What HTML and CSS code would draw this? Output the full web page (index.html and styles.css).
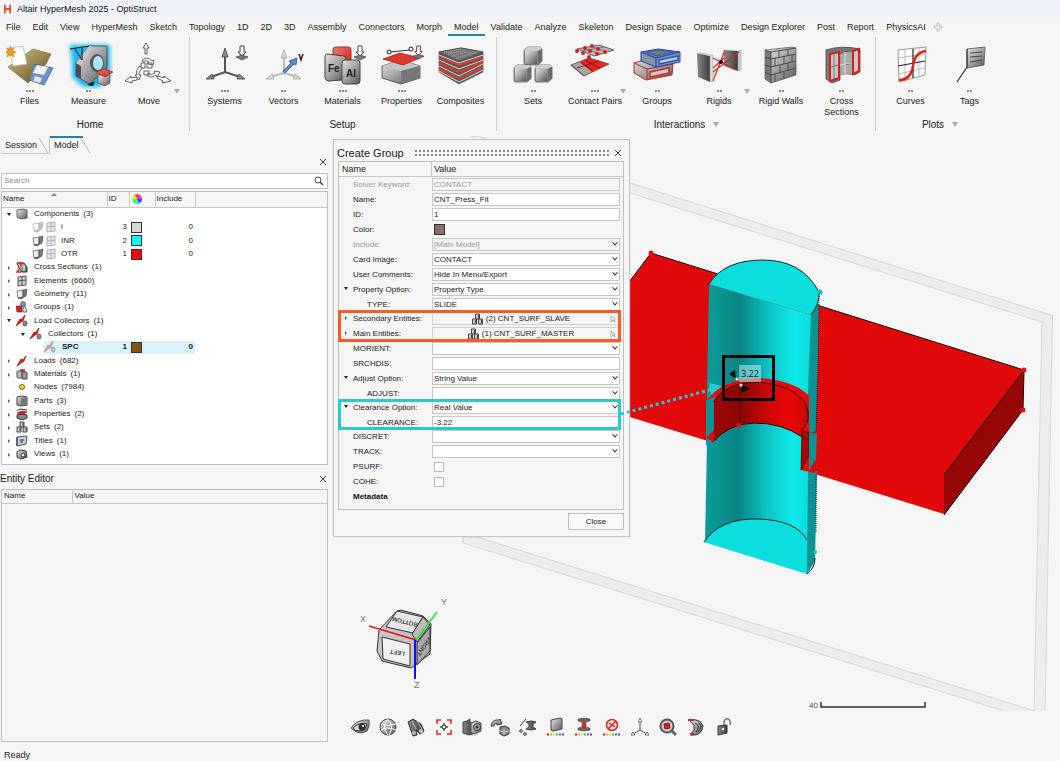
FILE: index.html
```html
<!DOCTYPE html>
<html lang="en">
<head>
<meta charset="utf-8">
<title>Altair HyperMesh 2025 - OptiStruct</title>
<link rel="stylesheet" href="styles.css">
</head>
<body>
<svg class="sprite" aria-hidden="true">
  <defs>
    <linearGradient id="steel" x1="0" y1="0" x2="1" y2="1"><stop offset="0" stop-color="#e4e4e4"/><stop offset=".5" stop-color="#a2a2a2"/><stop offset="1" stop-color="#555"/></linearGradient>
    <linearGradient id="dark" x1="0" y1="0" x2="1" y2="0"><stop offset="0" stop-color="#888"/><stop offset="1" stop-color="#3c3c3c"/></linearGradient>
    <linearGradient id="redg" x1="0" y1="0" x2="1" y2="1"><stop offset="0" stop-color="#f47a70"/><stop offset="1" stop-color="#c81c1c"/></linearGradient>
    <linearGradient id="tan" x1="0" y1="0" x2="1" y2="1"><stop offset="0" stop-color="#d0bd80"/><stop offset="1" stop-color="#665124"/></linearGradient>
    <linearGradient id="cyl" x1="0" y1="0" x2="1" y2="0"><stop offset="0" stop-color="#0c9a9a"/><stop offset=".12" stop-color="#0b9494"/><stop offset=".32" stop-color="#0a8282"/><stop offset=".6" stop-color="#0cc4c4"/><stop offset=".85" stop-color="#0eeaea"/><stop offset="1" stop-color="#0cdcdc"/></linearGradient>
    <linearGradient id="bore" x1="0" y1="0" x2="1" y2="0"><stop offset="0" stop-color="#9c0606"/><stop offset=".3" stop-color="#900505"/><stop offset=".6" stop-color="#d00707"/><stop offset=".8" stop-color="#ec0808"/><stop offset="1" stop-color="#c40606"/></linearGradient>
    <filter id="glow" x="-30%" y="-30%" width="160%" height="160%"><feGaussianBlur stdDeviation="2"/></filter>
  </defs>
  <symbol id="press" viewBox="0 0 14 16"><path d="M5 1h4v6h2L7 11 3 7h2z" fill="#fff" stroke="#444"/><path d="M1 12l6-2 6 2-6 3z" fill="#777" stroke="#444" stroke-width=".7"/></symbol>
  <symbol id="cube" viewBox="0 0 20 20"><path d="M1 4L4 1h13l2 2v12l-4 4H2l-1-2z" fill="#8c8c8c" stroke="#666" stroke-width=".8"/><path d="M2 5h12v13H3l-1-1z" fill="url(#steel)"/><path d="M1 4l3-3h13l2 2-4 2H2z" fill="#cfcfcf"/><path d="M15 5l4-2v12l-4 4z" fill="#6b6b6b"/></symbol>
  <symbol id="files" viewBox="0 0 48 48"><path d="M2 26L27 8l18 5-5 10-18 19z" fill="url(#tan)" stroke="#6a5a2a" stroke-width=".6"/><path d="M28 23l19 4-9 17-15-5z" fill="#6b94c4" stroke="#35547c" stroke-width=".7"/><path d="M31 24l11 2-4 8-11-2z" fill="#eef2f6"/><path d="M29 35l7 2-2 5-7-2z" fill="#e0e6ee"/><path d="M2 26L27 8l18 5-17 10-5 17z" fill="url(#tan)"/><path d="M3 7l14-2 4 18-14 2z" fill="#fdfdfd" stroke="#bbb" stroke-width=".8"/><path d="M4 5l1 3 3-1-1 3 3 1-3 2 1 3-4-2-3 2 1-3-3-2 3-1-1-3 3 1z" fill="#f49a12" stroke="#9a6410" stroke-width=".4"/></symbol>
  <symbol id="measure" viewBox="0 0 48 48"><path d="M7 6h36v29l-9 9H19L9 35V18z" fill="#12b9f6" stroke="#12b9f6" stroke-width="4" filter="url(#glow)"/><path d="M24 5h18v22L24 43 11 35V22z" fill="url(#steel)" stroke="#444" stroke-width=".8"/><path d="M11 22l5 3v13l-5-3z" fill="#4c4c4c"/><path d="M11 22L24 5l4 1-12 19z" fill="#c8c8c8"/><ellipse cx="32" cy="22" rx="7" ry="9" fill="#555"/><ellipse cx="33" cy="22" rx="5" ry="7" fill="#a8e6fa"/><path d="M5 8l19-3M10 8l7 11V7" fill="none" stroke="#111"/><path d="M33 34h12v8l-5 3-7-3z" fill="url(#steel)" stroke="#444" stroke-width=".6"/><path d="M31 31l9-3 8 3-8 5z" fill="url(#redg)" stroke="#a11" stroke-width=".5"/><path d="M22 44l8-4-2 5z" fill="#111"/></symbol>
  <symbol id="move" viewBox="0 0 48 48"><g fill="#fafafa" stroke="#555" stroke-width=".9"><path d="M20 13V7h-2l3-5 3 5h-2v6zM0 40l6-5v2l6-1v3l-5 1v2zM46 40l-7-5v2l-6-2-1 2 6 3-1 2z"/><path d="M17 20q5-6 10 0l2-1-1 5-5-1 1-2q-3-3-5 0zM15 25q-5 5-3 9h-2l4 5 2-5h-2q-1-3 3-7zM22 34q4 4 9 0l1 2 3-5-6-1 1 2q-4 3-7 0zM16 22h4v5h-4zM22 22h5v5h-5zM19 30h5v4h-5z"/></g></symbol>
  <symbol id="systems" viewBox="0 0 48 48"><path d="M24 13v18M24 31l-14 5M24 31l15 5" stroke="#555" stroke-width="2" fill="none"/><path d="M24 7l3 9h-6zM5 38l6-5 2 5zM44 38l-6-5-2 5z" fill="#8a8a8a" stroke="#444" stroke-width=".8"/><use href="#press" x="34" y="4" width="14" height="16"/></symbol>
  <symbol id="vectors" viewBox="0 0 48 48"><path d="M24 14v18L10 36M24 32l14 4" stroke="#bbb" stroke-width="2" fill="none"/><path d="M24 9l3 8h-6zM6 38l6-5 2 5zM41 38l-6-5-2 5z" fill="#d4d4d4" stroke="#aaa" stroke-width=".8"/><path d="M23 30l8-8-2-2 8-3-1 7-2-1-9 9z" fill="#5b8fd0" stroke="#2b5288" stroke-width=".8"/><path d="M39 13l2 6 2-6" fill="none" stroke="#222" stroke-width="1.500"/></symbol>
  <symbol id="materials" viewBox="0 0 48 48"><rect x="14" y="6" width="18" height="22" rx="3" fill="url(#redg)" stroke="#933"/><path d="M8 13l17 2q2 0 2 3l-1 18q0 3-3 3L9 40q-3-1-3-4V16q0-3 2-3z" fill="url(#steel)" stroke="#444"/><text class="element" x="9" y="31">Fe</text><rect x="23" y="19" width="18" height="24" rx="3" fill="url(#steel)" stroke="#444"/><text class="element" x="27" y="36">Al</text><use href="#press" x="34" y="4" width="14" height="16"/></symbol>
  <symbol id="properties" viewBox="0 0 48 48"><path d="M4 25l19-6 19 6v12l-19 6-19-6z" fill="url(#steel)" stroke="#444" stroke-width=".8"/><path d="M4 25l19 5 19-5-19-6z" fill="#c4c4c4"/><path d="M23 30v13l19-6V25z" fill="#777"/><path d="M5 18l17-6 20 5-17 7z" fill="#e0382e" stroke="#922" stroke-width=".8"/><path d="M12 11l20-2" stroke="#333"/><circle cx="11" cy="11" r="2" fill="#fff" stroke="#222"/><circle cx="33" cy="8" r="2" fill="#fff" stroke="#222"/><use href="#press" x="34" y="4" width="13" height="15"/></symbol>
  <symbol id="composites" viewBox="0 0 48 48"><path d="M2 11L24 7l22 4v20L22 43 2 31z" fill="#555" stroke="#444" stroke-width=".6"/><g fill="none" stroke="#e33a2e" stroke-width="2"><path d="M2 16l20 8 24-8M2 22l20 9 24-10M2 28l20 10 24-12"/></g><g fill="none" stroke="#ddd"><path d="M2 14l20 8 24-8M2 19l20 9 24-9M2 25l20 10 24-12M2 30l20 11 24-12"/></g><path d="M2 11L24 7l22 4-24 9z" fill="#777" stroke="#555"/><path d="M7 11l17-3M11 13l18-4M15 15l19-5M19 17l21-6" stroke="#aaa" stroke-dasharray="1 1"/></symbol>
  <symbol id="sets" viewBox="0 0 48 48"><use href="#cube" x="14" y="5" width="20" height="20"/><use href="#cube" x="4" y="23" width="19" height="19"/><use href="#cube" x="25" y="23" width="19" height="19"/></symbol>
  <symbol id="contact" viewBox="0 0 48 48"><path d="M6 8l22-4 15 5-20 6z" fill="#b8b8b8" stroke="#666"/><path d="M13 7l16 6M20 5l15 6M11 10l22-4" stroke="#666" fill="none" stroke-width=".8"/><path d="M0 24l18-7 20 6-25 12z" fill="#a5a5a5" stroke="#666"/><path d="M9 21l9-4 20 6-17 8z" fill="#e4261e"/><path d="M9 21l13 9M14 19l15 8M6 27l22-7M0 24l13 11" stroke="#801" stroke-width=".8"/><g fill="#d8201c"><circle cx="6" cy="10" r="2"/><circle cx="14" cy="7" r="2"/><circle cx="21" cy="5" r="2"/><circle cx="12" cy="12" r="2"/><circle cx="19" cy="10" r="2"/><circle cx="27" cy="8" r="2"/><circle cx="18" cy="16" r="2"/><circle cx="26" cy="13" r="2"/><circle cx="34" cy="11" r="2"/></g></symbol>
  <symbol id="groups" viewBox="0 0 48 48"><path d="M1 22l17-5 22 6-1 11-26 5-12-7z" fill="url(#steel)" stroke="#c0281c"/><path d="M1 22l13 6 26-5M14 28v11" stroke="#c0281c" fill="none"/><path d="M17 31l19-4v5l-19 4z" fill="#ccc" stroke="#d32b1e" stroke-width="1.500"/><path d="M8 11L25 8l22 3v10l-24 5L8 20z" fill="#8a93a4" stroke="#1f46a8"/><path d="M13 11l12-2 16 2-17 4z" fill="#777" stroke="#2a56c4"/><path d="M8 11l15 6 24-6M23 17v9" stroke="#2a56c4" fill="none" stroke-width="1.500"/><path d="M26 19l19-4v4l-19 4z" fill="#ccc" stroke="#2a56c4" stroke-width="1.500"/></symbol>
  <symbol id="rigids" viewBox="0 0 48 48"><path d="M2 12l13 3v26L3 36z" fill="url(#dark)"/><path d="M15 15l3-1v26l-3 1z" fill="#ddd" stroke="#999" stroke-width=".5"/><path d="M2 12l4-1 12 3-3 1z" fill="#ccc"/><path d="M29 9l14 1v20l-14-5z" fill="url(#dark)"/><path d="M43 10l3-1v20l-3 1z" fill="#ccc" stroke="#999" stroke-width=".5"/><path d="M18 17l23 12M18 40L30 9M18 31l26-20M18 27l11-10" stroke="#d6281e" stroke-width="1.200"/><circle cx="26" cy="21" r="2" fill="#211"/></symbol>
  <symbol id="walls" viewBox="0 0 48 48"><path d="M8 9l27-3 4 1v27L14 42l-6-4z" fill="url(#steel)" stroke="#555" stroke-width=".7"/><path d="M8 9l6 2v31l-6-4z" fill="#777"/><path d="M8 9l6 2 25-4M14 11v31M14 18l25-5M14 26l25-6M14 34l25-7M8 16l6 2M8 24l6 2M8 31l6 3M22 10v7M31 8v7M18 17v8M27 15v8M35 14v7M23 24v8M31 22v7M18 33v8M27 31v7" fill="none" stroke="#444" stroke-width=".9"/></symbol>
  <symbol id="sections" viewBox="0 0 48 48"><path d="M8 9q15-5 34-1v23l-6 3V11q-9-2-14 2v26l-8 3-6-4z" fill="#777" stroke="#444" stroke-width=".8"/><path d="M22 13q7-3 14-2v23q-8-2-14 0z" fill="#aaa" stroke="#777" stroke-width=".6"/><path d="M27 11v22M22 24q7-2 14-1" stroke="#ddd"/><path d="M12 13l9-2v26l-9 3zM35 10l6-2v22l-6 3z" fill="#c7c7c7" stroke="#d42218" stroke-width="2"/><path d="M16 13v25M13 26l7-2" stroke="#777"/></symbol>
  <symbol id="curves" viewBox="0 0 48 48"><path d="M11 9l28-3-1 28-26 7z" fill="#fff" stroke="#999"/><path d="M18 8v31M32 7v29M11 17l27-4M11 33l27-6" stroke="#bbb"/><path d="M26 8v29M11 25l27-5" stroke="#222" stroke-width="1.200"/><path d="M12 39q12 0 14-14t13-15" fill="none" stroke="#dc2318" stroke-width="2.500"/></symbol>
  <symbol id="tags" viewBox="0 0 48 48"><path d="M21 8l18-2-1 18-17 3z" fill="url(#steel)" stroke="#555" stroke-width=".8"/><path d="M24 12l12-1M24 16l12-1M24 21l12-2" stroke="#444"/><path d="M21 8v18L11 41" fill="none" stroke="#333" stroke-width="1.200"/></symbol>

  <symbol id="t-comp" viewBox="0 0 12 12"><path d="M1 2l6-1 4 1v8l-6 1-4-2z" fill="url(#steel)" stroke="#444" stroke-width=".8"/></symbol>
  <symbol id="t-geo" viewBox="0 0 12 12"><path d="M1 3l6-1v7l-5 1z" fill="#eee" stroke="#666" stroke-width=".8"/><path d="M7 2l4-1-1 7-5 3-3-1 5-1z" fill="#777" stroke="#444" stroke-width=".6"/></symbol>
  <symbol id="t-elem" viewBox="0 0 12 12"><path d="M2 2l8-1v9l-8 1z" fill="#ccc" stroke="#555"/><path d="M6 1v10M2 6l8-1" stroke="#555"/></symbol>
  <symbol id="t-cross" viewBox="0 0 12 12"><path d="M1 2h7l3 4v5H6L3 7z" fill="url(#steel)" stroke="#333"/><path d="M1 2h5L4 5M3 8l-2 3h4" fill="none" stroke="#d8281e" stroke-width="1.500"/><path d="M8 5v5" stroke="#fff"/></symbol>
  <symbol id="t-group" viewBox="0 0 12 12"><path d="M0 5h6v6H1z" fill="#d8281e" stroke="#711" stroke-width=".6"/><circle cx="7" cy="3" r="2.500" fill="#5d9be0" stroke="#246" stroke-width=".6"/><path d="M7 7l2-2 2 6H7z" fill="#ddd" stroke="#555" stroke-width=".8"/></symbol>
  <symbol id="t-load" viewBox="0 0 12 12"><path d="M1 11L5 4l2 1 3-4-2 5-3 2z" fill="#d8281e" stroke="#a11" stroke-width=".8"/></symbol>
  <symbol id="t-lc" viewBox="0 0 12 12"><path d="M0 11L4 4l1 1 4-5-2 6-3 2z" fill="#d8281e" stroke="#a11" stroke-width=".8"/><rect x="7" y="6" width="4" height="5" rx="2" fill="#888" stroke="#444" stroke-width=".7"/></symbol>
  <symbol id="t-mat" viewBox="0 0 12 12"><rect x="4" y="1" width="5" height="5" fill="#d8483e"/><rect x="1" y="3" width="5" height="7" rx="1" fill="#bbb" stroke="#555"/><rect x="6" y="4" width="5" height="7" rx="1" fill="#999" stroke="#444"/></symbol>
  <symbol id="t-node" viewBox="0 0 12 12"><circle cx="6" cy="6" r="2.500" fill="#f0d820" stroke="#776a10"/></symbol>
  <symbol id="t-part" viewBox="0 0 12 12"><path d="M1 2l5-1 5 1v8l-5 1-5-1z" fill="url(#steel)" stroke="#444"/><path d="M5 3v8l6-1V2z" fill="#777"/></symbol>
  <symbol id="t-prop" viewBox="0 0 12 12"><path d="M1 7l5-1 5 1v3l-5 2-5-2z" fill="#888" stroke="#333"/><path d="M1 5l5-2 5 1-5 3z" fill="#d8281e" stroke="#711" stroke-width=".6"/><path d="M1 3l3-2 7 1" stroke="#333" fill="none"/></symbol>
  <symbol id="t-set" viewBox="0 0 12 12"><g fill="#ccc" stroke="#333" stroke-width=".9"><path d="M4 1h4v5H4z"/><path d="M1 6h4v5H1zM7 6h4v5H7z"/></g><path d="M7 2v3M4 7v3M10 7v3" stroke="#444"/></symbol>
  <symbol id="t-title" viewBox="0 0 12 12"><path d="M1 2l10-1-1 8-9 2z" fill="#c6d0d8" stroke="#456"/><path d="M1 2v9M4 5h4M4 7h3" stroke="#234"/></symbol>
  <symbol id="t-view" viewBox="0 0 12 12"><path d="M1 4l3-2 6 1 1 6-6 2-4-2z" fill="url(#steel)" stroke="#333"/><circle cx="7" cy="7" r="2" fill="#eee" stroke="#333"/></symbol>

  <symbol id="eye" viewBox="0 0 20 20"><path d="M1 11Q7 2 19 3q1 7-2 11-8 5-16-3z" fill="url(#steel)" stroke="#555"/><path d="M3 11q6-6 14-4-2 7-8 7-4 0-6-3z" fill="#ddd" stroke="#333"/><circle cx="12" cy="10" r="3.500" fill="#333"/><circle cx="13" cy="9" r="1" fill="#fff"/></symbol>
  <symbol id="globe" viewBox="0 0 20 20"><circle cx="10" cy="10" r="8" fill="url(#steel)" stroke="#444"/><path d="M10 2q-7 8 0 16M9 2q8 7 2 16M3 7q8 3 15 0M3 13q6-4 15 0" fill="none" stroke="#fff"/></symbol>
  <symbol id="binoc" viewBox="0 0 20 20"><path d="M2 5l5-3 8 5 3 7-4 3-4-4 1 5-4 1z" fill="url(#dark)" stroke="#333"/><path d="M6 4l4 8M11 4l5 8" stroke="#bbb"/><circle cx="8" cy="16" r="2" fill="#bbb"/><circle cx="15" cy="14" r="2" fill="#ccc"/></symbol>
  <symbol id="fit" viewBox="0 0 20 20"><path d="M3 7V3h4M13 3h4v4M17 13v4h-4M7 17H3v-4" fill="none" stroke="#e0281e" stroke-width="1.500"/><circle cx="10" cy="10" r="2" fill="#fff" stroke="#111"/><path d="M10 6v2M10 12v2M6 10h2M12 10h2" stroke="#111"/></symbol>
  <symbol id="camera" viewBox="0 0 20 20"><path d="M1 5l4-1 3-2v3l3 1v11l-4 1-6-2z" fill="url(#dark)" stroke="#444"/><path d="M9 6l5-2 5 2v8l-6 3-4-1z" fill="url(#steel)" stroke="#555"/><circle cx="15" cy="10" r="3.500" fill="#aaa" stroke="#333"/><circle cx="15" cy="10" r="1.500" fill="#333"/></symbol>
  <symbol id="orbit" viewBox="0 0 20 20"><path d="M1 9Q2 2 9 3l1-1 2 5-5 1v-2Q4 6 4 9z" fill="url(#steel)" stroke="#444"/><path d="M10 10l5-1 4 2v6l-5 2-4-2z" fill="#888" stroke="#333"/><path d="M14 12v6M10 14l4 1 5-1" stroke="#ddd"/></symbol>
  <symbol id="spool" viewBox="0 0 20 20"><path d="M2 9l6-7" stroke="#333"/><circle cx="3" cy="14" r="1.300" fill="#fff" stroke="#333"/><circle cx="7" cy="17" r="1.300" fill="#fff" stroke="#333"/><path d="M8 5q5-2 10 0l-3 2v3l3 2q-5 2-10 0l3-2V7z" fill="url(#dark)" stroke="#444"/></symbol>
  <symbol id="rainbow" viewBox="0 0 20 3"><path d="M1 1.500h2" stroke="#e11" stroke-width="2"/><path d="M4 1.500h2" stroke="#fa2" stroke-width="2"/><path d="M7 1.500h2" stroke="#ee2" stroke-width="2"/><path d="M10 1.500h2" stroke="#3c3" stroke-width="2"/><path d="M13 1.500h2" stroke="#27e" stroke-width="2"/><path d="M16 1.500h2" stroke="#73d" stroke-width="2"/></symbol>
  <symbol id="shade" viewBox="0 0 20 20"><path d="M5 3l9-2 2 1v10l-9 2-2-1z" fill="url(#steel)" stroke="#444"/><use href="#rainbow" x="0" y="16" width="20" height="3"/></symbol>
  <symbol id="bolt" viewBox="0 0 20 20"><path d="M4 2q6-2 12 0v2l-4 1v5l4 1v2q-6 2-12 0v-2l4-1V5L4 4z" fill="#666" stroke="#444" stroke-width=".5"/><path d="M8 5h4v6H8z" fill="#e0281e"/><use href="#rainbow" x="0" y="16" width="20" height="3"/></symbol>
  <symbol id="noent" viewBox="0 0 20 20"><circle cx="10" cy="8" r="5.500" fill="#e8d8d6" stroke="#d02a22" stroke-width="1.500"/><path d="M6 12l8-8M7 6l6 4" stroke="#d02a22" stroke-width="1.500"/><use href="#rainbow" x="0" y="16" width="20" height="3"/></symbol>
  <symbol id="triad" viewBox="0 0 20 20"><path d="M10 5v8L3 17M10 13l7 4" fill="none" stroke="#555"/><path d="M10 1l2 4H8zM1 18l2-3 2 3zM19 18l-2-3-2 3z" fill="#fff" stroke="#555" stroke-width=".8"/></symbol>
  <symbol id="lens" viewBox="0 0 20 20"><path d="M13 13l5 5" stroke="#666" stroke-width="3"/><circle cx="9" cy="9" r="6.500" fill="#ccc" stroke="#555" stroke-width="2"/><path d="M6 7l5-1 1 5-5 1z" fill="#d8281e" stroke="#911"/></symbol>
  <symbol id="clip" viewBox="0 0 20 20"><path d="M3 3q11-2 14 6-1 8-8 9H4l4-5V8z" fill="url(#steel)" stroke="#333"/><path d="M9 6q6 3 1 9M13 6q4 4-1 9" fill="none" stroke="#333"/><path d="M2 3h6M4 17h4" stroke="#d8281e" stroke-width="2"/></symbol>
  <symbol id="unlock" viewBox="0 0 20 20"><path d="M10 9V5q1-4 4-3 3 1 2 6" fill="none" stroke="#777" stroke-width="1.500"/><path d="M4 9l9-1v8l-9 2z" fill="url(#dark)" stroke="#333"/><circle cx="9" cy="12" r="1.300" fill="#eee"/></symbol>
</svg>

<div class="app">
  <header class="titlebar">
    <svg class="logo" viewBox="0 0 10 12" aria-hidden="true"><path d="M1 1h2v3q2 2 4 0V1h2v10H7V8q-2-2-4 0v3H1z" fill="#f2542d"/></svg>
    <h1>Altair HyperMesh 2025 - OptiStruct</h1>
  </header>

  <nav class="menu">
    <a href="#">File</a><a href="#">Edit</a><a href="#">View</a><a href="#">HyperMesh</a><a href="#">Sketch</a><a href="#">Topology</a><a href="#">1D</a><a href="#">2D</a><a href="#">3D</a><a href="#">Assembly</a><a href="#">Connectors</a><a href="#">Morph</a><a href="#" class="current">Model</a><a href="#">Validate</a><a href="#">Analyze</a><a href="#">Skeleton</a><a href="#">Design Space</a><a href="#">Optimize</a><a href="#">Design Explorer</a><a href="#">Post</a><a href="#">Report</a><a href="#">PhysicsAI</a>
    <button class="add-tab" aria-label="Add ribbon"><svg viewBox="0 0 10 10"><path d="M4 1h2v3h3v2H6v3H4V6H1V4h3z" fill="#fff" stroke="#bbb"/></svg></button>
  </nav>

  <div class="ribbon">
    <section class="group">
      <div class="tools">
        <button class="tool"><svg><use href="#files"/></svg><i class="dots three"></i><span>Files</span></button>
        <button class="tool"><svg><use href="#measure"/></svg><i class="dots"></i><span>Measure</span></button>
        <button class="tool wide more"><svg><use href="#move"/></svg><i class="dots none"></i><span>Move</span></button>
      </div>
      <h2>Home</h2>
    </section>
    <section class="group">
      <div class="tools">
        <button class="tool"><svg><use href="#systems"/></svg><i class="dots three"></i><span>Systems</span></button>
        <button class="tool"><svg><use href="#vectors"/></svg><i class="dots"></i><span>Vectors</span></button>
        <button class="tool"><svg><use href="#materials"/></svg><i class="dots three"></i><span>Materials</span></button>
        <button class="tool"><svg><use href="#properties"/></svg><i class="dots three"></i><span>Properties</span></button>
        <button class="tool"><svg><use href="#composites"/></svg><i class="dots none"></i><span>Composites</span></button>
      </div>
      <h2>Setup</h2>
    </section>
    <section class="group">
      <div class="tools">
        <button class="tool wide"><svg><use href="#sets"/></svg><i class="dots"></i><span>Sets</span></button>
        <button class="tool wide more"><svg><use href="#contact"/></svg><i class="dots three"></i><span>Contact Pairs</span></button>
        <button class="tool wide"><svg><use href="#groups"/></svg><i class="dots"></i><span>Groups</span></button>
        <button class="tool wide more"><svg><use href="#rigids"/></svg><i class="dots"></i><span>Rigids</span></button>
        <button class="tool wide"><svg><use href="#walls"/></svg><i class="dots"></i><span>Rigid Walls</span></button>
        <button class="tool"><svg><use href="#sections"/></svg><i class="dots"></i><span>Cross<br>Sections</span></button>
      </div>
      <h2 class="drop">Interactions</h2>
    </section>
    <section class="group">
      <div class="tools">
        <button class="tool"><svg><use href="#curves"/></svg><i class="dots"></i><span>Curves</span></button>
        <button class="tool"><svg><use href="#tags"/></svg><i class="dots"></i><span>Tags</span></button>
      </div>
      <h2 class="drop">Plots</h2>
    </section>
  </div>

  <main class="workspace">
    <aside class="sidebar">
      <div class="tabs">
        <button class="tab">Session<svg viewBox="0 0 10 16"><path d="M0 1l9 15" fill="none" stroke="#b4b4b4"/></svg></button>
        <button class="tab active">Model<svg viewBox="0 0 10 16"><path d="M0 1l9 15" fill="none" stroke="#b4b4b4"/></svg></button>
      </div>
      <div class="panel-top"><button class="close" aria-label="Close browser"><svg viewBox="0 0 8 8"><path d="M1 1l6 6M7 1L1 7" stroke="#444"/></svg></button></div>
      <div class="search">
        <input type="search" placeholder="Search" aria-label="Search">
        <svg viewBox="0 0 10 10" aria-hidden="true"><circle cx="4" cy="4" r="3" fill="none" stroke="#444"/><path d="M6 6l3 3" stroke="#444" stroke-width="1.500"/></svg>
      </div>
      <div class="tree-box">
        <table class="tree">
          <colgroup><col class="c-name"><col class="c-id"><col class="c-color"><col class="c-inc"><col></colgroup>
          <thead><tr><th class="sorted">Name</th><th>ID</th><th><span class="wheel"></span></th><th>Include</th><th></th></tr></thead>
          <tbody>
            <tr><td><div class="node open"><svg><use href="#t-comp"/></svg>Components&ensp;(3)</div></td><td></td><td></td><td></td><td></td></tr>
            <tr><td><div class="node leaf"><svg class="dim"><use href="#t-geo"/></svg><svg class="dim"><use href="#t-elem"/></svg>i</div></td><td>3</td><td><span class="chip grey"></span></td><td>0</td><td></td></tr>
            <tr><td><div class="node leaf"><svg><use href="#t-geo"/></svg><svg class="dim"><use href="#t-elem"/></svg>INR</div></td><td>2</td><td><span class="chip cyan"></span></td><td>0</td><td></td></tr>
            <tr><td><div class="node leaf"><svg><use href="#t-geo"/></svg><svg class="dim"><use href="#t-elem"/></svg>OTR</div></td><td>1</td><td><span class="chip red"></span></td><td>0</td><td></td></tr>
            <tr><td><div class="node shut"><svg><use href="#t-cross"/></svg>Cross Sections&ensp;(1)</div></td><td></td><td></td><td></td><td></td></tr>
            <tr><td><div class="node shut"><svg><use href="#t-elem"/></svg>Elements&ensp;(6660)</div></td><td></td><td></td><td></td><td></td></tr>
            <tr><td><div class="node shut"><svg><use href="#t-geo"/></svg>Geometry&ensp;(11)</div></td><td></td><td></td><td></td><td></td></tr>
            <tr><td><div class="node shut"><svg><use href="#t-group"/></svg>Groups&ensp;(1)</div></td><td></td><td></td><td></td><td></td></tr>
            <tr><td><div class="node open"><svg><use href="#t-lc"/></svg>Load Collectors&ensp;(1)</div></td><td></td><td></td><td></td><td></td></tr>
            <tr><td><div class="node open level2"><svg><use href="#t-lc"/></svg>Collectors&ensp;(1)</div></td><td></td><td></td><td></td><td></td></tr>
            <tr class="selected"><td><div class="node level3"><svg class="dim"><use href="#t-lc"/></svg>SPC</div></td><td>1</td><td><span class="chip brown"></span></td><td>0</td><td></td></tr>
            <tr><td><div class="node shut"><svg><use href="#t-load"/></svg>Loads&ensp;(682)</div></td><td></td><td></td><td></td><td></td></tr>
            <tr><td><div class="node shut"><svg><use href="#t-mat"/></svg>Materials&ensp;(1)</div></td><td></td><td></td><td></td><td></td></tr>
            <tr><td><div class="node"><svg><use href="#t-node"/></svg>Nodes&ensp;(7984)</div></td><td></td><td></td><td></td><td></td></tr>
            <tr><td><div class="node shut"><svg><use href="#t-part"/></svg>Parts&ensp;(3)</div></td><td></td><td></td><td></td><td></td></tr>
            <tr><td><div class="node shut"><svg><use href="#t-prop"/></svg>Properties&ensp;(2)</div></td><td></td><td></td><td></td><td></td></tr>
            <tr><td><div class="node shut"><svg><use href="#t-set"/></svg>Sets&ensp;(2)</div></td><td></td><td></td><td></td><td></td></tr>
            <tr><td><div class="node shut"><svg><use href="#t-title"/></svg>Titles&ensp;(1)</div></td><td></td><td></td><td></td><td></td></tr>
            <tr><td><div class="node shut"><svg><use href="#t-view"/></svg>Views&ensp;(1)</div></td><td></td><td></td><td></td><td></td></tr>
          </tbody>
        </table>
      </div>
      <div class="editor-head"><h2>Entity Editor</h2><button class="close" aria-label="Close entity editor"><svg viewBox="0 0 8 8"><path d="M1 1l6 6M7 1L1 7" stroke="#444"/></svg></button></div>
      <div class="editor-box">
        <table class="editor"><thead><tr><th>Name</th><th>Value</th></tr></thead></table>
      </div>
    </aside>

    <section class="viewport">
      <svg class="scene" viewBox="328 136 732 624" preserveAspectRatio="xMinYMin slice" role="img" aria-label="Press fit model">
        <path fill-rule="evenodd" d="M630 183l422.500 132.500-7.500 395.200H1003L463 543v-6h14l557 173.700 8-388.700L630 193z" fill="#ededed"/>
        <path d="M470 137l8-1 9 3M630 183l422.500 132.500-7.500 395.200M1003 710.700L463 543v-6l14 0 557 173.700 8-388.700-412-129" fill="none" stroke="#d8d8d8"/>
        <path d="M620 294l31-41 373 117-80 144-142-44L620 414z" fill="#e00808"/>
        <path d="M1024 370l-1 40-79 105v-40z" fill="#960606"/>
        <path d="M620 294l31-41 373 117-80 105M1024 370l-1 40-79 105" fill="none" stroke="#111"/>
        <path d="M709 284l102 31v120l-10 40-95-30z" fill="url(#cyl)"/>
        <path d="M811 315l8-12-1 57-2 70-7 10-1-50z" fill="#0b9292"/>
        <path d="M819 296l-1 74-2 62" fill="none" stroke="#222" stroke-dasharray="1 1"/>
        <path d="M709 284Q724 260 763 260T819 292q1 11-8 23z" fill="#0cdede"/>
        <path d="M709 284Q724 260 763 260T819 292q1 11-8 23" fill="none" stroke="#222"/>
        <path d="M713 441q17-19 42-18t53 20v131l-103-32 2-101z" fill="url(#cyl)"/>
        <path d="M808 470l9 1-2 90-8 13z" fill="#0b9292"/>
        <path d="M816 475v57" stroke="#222" stroke-dasharray="1 1"/>
        <path d="M704 542q16-24 54-23t49 21v34z" fill="#0cdede"/>
        <path d="M704 542q16-24 54-23t49 21M807 574q8-6 8-16" fill="none" stroke="#222"/>
        <path d="M707 401q14-22 53-23 36 3 49 18v42l-7-2-88-39z" fill="#e80a0a"/>
        <path d="M713 442v-40q14-20 43-20 46 3 53 33l-7 22q-17-14-48-14-26 1-41 19z" fill="url(#bore)"/>
        <path d="M713 442v-40q14-20 43-20 38 3 50 22 6 17-4 26M713 442q15-18 41-19 29 0 48 14" fill="none" stroke="#2a0000"/>
        <path d="M706 400l8 2v28l-8 8z" fill="#0b9494"/><path d="M706 438l8-8v12z" fill="#e00808"/>
        <path d="M802 430l15 3-2 40-14-3z" fill="#e00808"/><path d="M802 430l7 3v22l-8 15z" fill="#a40606" stroke="#400" stroke-width=".6"/>
        <path d="M809 432l8 2-1 25-7 12z" fill="#0b9494"/>
        <path d="M740 383v42" stroke="#300" stroke-dasharray="2 1"/>
        <g fill="#e01010"><circle cx="651" cy="253" r="2.500"/><circle cx="1024" cy="370" r="2.500"/><circle cx="1023" cy="410" r="2.500"/><circle cx="739" cy="425" r="2.500"/></g>
        <g fill="#0cc4c4"><circle cx="820" cy="292" r="2.500"/><circle cx="815" cy="552" r="2"/></g>

        <g stroke="#333" stroke-linejoin="round">
          <path d="M379 630l18-19 4-1 22 6 8 8-1 30-19 14-29-7-5-10z" fill="#c4c4c4"/>
          <path d="M397 611l26 6-10 16-27-6z" fill="#e6e6e6"/>
          <path d="M382 637l28 7v22l-27-7z" fill="#f0f0f0"/>
          <path d="M417 643l13-16v24l-13 14z" fill="#aaa"/>
          <path d="M423 617l7 8-13 17-5-8z" fill="#bbb"/>
        </g>
        <text class="face" transform="translate(418 623) rotate(194)" x="0" y="0">BOTTOM</text>
        <text class="face" transform="translate(405 652) rotate(190)" x="0" y="0">LEFT</text>
        <text class="face" transform="translate(428 637) rotate(125)" x="0" y="0">FRONT</text>
        <path d="M369 626l47 14" stroke="#f01010" stroke-width="1.500"/><path d="M416 640l21-28" stroke="#20e820" stroke-width="1.500"/><path d="M415 640v39" stroke="#1010f0" stroke-width="2"/>
        <text class="axis" x="360" y="622">X</text><text class="axis" x="441" y="605">Y</text><text class="axis" x="414" y="688">Z</text>
        <path d="M821 702v5h104v-5" fill="none" stroke="#333" stroke-width="1.500"/><text class="scale" x="809" y="708">40</text>
      </svg>

      <form class="dialog" onsubmit="return false">
        <header><h2>Create Group</h2><span class="grip"></span><button type="button" class="close" aria-label="Close dialog"><svg viewBox="0 0 8 8"><path d="M1 1l6 6M7 1L1 7" stroke="#444"/></svg></button></header>
        <div class="sheet">
          <div class="sheet-head"><span>Name</span><span>Value</span></div>
          <div class="row off"><label for="f1">Solver Keyword:</label><input id="f1" value="CONTACT" disabled></div>
          <div class="row"><label for="f2">Name:</label><input id="f2" value="CNT_Press_Fit"></div>
          <div class="row"><label for="f3">ID:</label><input id="f3" value="1"></div>
          <div class="row"><label for="f4">Color:</label><button type="button" id="f4" class="chip mauve" aria-label="Color"></button></div>
          <div class="row off"><label for="f5">Include:</label><div class="pick"><select id="f5" disabled><option>[Main Model]</option></select></div></div>
          <div class="row"><label for="f6">Card Image:</label><div class="pick"><select id="f6"><option>CONTACT</option></select></div></div>
          <div class="row"><label for="f7">User Comments:</label><div class="pick"><select id="f7"><option>Hide In Menu/Export</option></select></div></div>
          <div class="row open"><label for="f8">Property Option:</label><div class="pick"><select id="f8"><option>Property Type</option></select></div></div>
          <div class="row sub"><label for="f9">TYPE:</label><div class="pick"><select id="f9"><option>SLIDE</option></select></div></div>
          <div class="mark orange">
            <div class="row shut"><label for="f10">Secondary Entities:</label><button type="button" id="f10" class="entity"><svg class="ico"><use href="#t-set"/></svg><span>(2) CNT_SURF_SLAVE</span><svg class="cursor" viewBox="0 0 6 8"><path d="M1 1v6l2-2 2 2-1-3h1z" fill="#fff" stroke="#888" stroke-width=".7"/></svg></button></div>
            <div class="row shut"><label for="f11">Main Entities:</label><button type="button" id="f11" class="entity"><svg class="ico"><use href="#t-set"/></svg><span>(1) CNT_SURF_MASTER</span><svg class="cursor" viewBox="0 0 6 8"><path d="M1 1v6l2-2 2 2-1-3h1z" fill="#fff" stroke="#888" stroke-width=".7"/></svg></button></div>
          </div>
          <div class="row"><label for="f12">MORIENT:</label><div class="pick"><select id="f12"><option></option></select></div></div>
          <div class="row"><label for="f13">SRCHDIS:</label><input id="f13"></div>
          <div class="row open"><label for="f14">Adjust Option:</label><div class="pick"><select id="f14"><option>String Value</option></select></div></div>
          <div class="row sub"><label for="f15">ADJUST:</label><div class="pick"><select id="f15"><option></option></select></div></div>
          <div class="mark teal">
            <div class="row open"><label for="f16">Clearance Option:</label><div class="pick"><select id="f16"><option>Real Value</option></select></div></div>
            <div class="row sub"><label for="f17">CLEARANCE:</label><input id="f17" value="-3.22"></div>
          </div>
          <div class="row"><label for="f18">DISCRET:</label><div class="pick"><select id="f18"><option></option></select></div></div>
          <div class="row"><label for="f19">TRACK:</label><div class="pick"><select id="f19"><option></option></select></div></div>
          <div class="row"><label for="f20">PSURF:</label><input id="f20" type="checkbox"></div>
          <div class="row"><label for="f21">COHE:</label><input id="f21" type="checkbox"></div>
          <div class="row"><strong>Metadata</strong></div>
        </div>
        <footer><button type="button" class="push">Close</button></footer>
      </form>

      <svg class="scene notes" viewBox="328 136 732 624" preserveAspectRatio="xMinYMin slice" aria-hidden="true">
        <path d="M621 414l92-25" stroke="#2cc8d0" stroke-width="3" stroke-dasharray="3 3"/><path d="M709 383l13 3-11 9z" fill="#2cc8d0"/>
        <rect x="739" y="365" width="22" height="17" fill="#a8e8e8" opacity=".6"/>
        <text class="measure" x="741" y="377">3.22</text>
        <path d="M729 374l6-4 1 9zM741 384l9 5-9 4z" fill="#111"/><path d="M735 377l6 11" stroke="#e01010" stroke-width="1.500"/><circle cx="737" cy="379" r="1.500" fill="#fff"/><circle cx="741" cy="385" r="1.500" fill="#fff"/>
        <rect x="723.500" y="356.500" width="50" height="43" fill="none" stroke="#000" stroke-width="3"/>
      </svg>

      <div class="viewbar">
        <button aria-label="Visibility"><svg><use href="#eye"/></svg></button>
        <button aria-label="Globe"><svg><use href="#globe"/></svg></button>
        <button aria-label="Find"><svg><use href="#binoc"/></svg></button>
        <button aria-label="Fit"><svg><use href="#fit"/></svg></button>
        <button aria-label="Capture"><svg><use href="#camera"/></svg></button>
        <button aria-label="Rotate"><svg><use href="#orbit"/></svg></button>
        <button aria-label="Elements"><svg><use href="#spool"/></svg></button>
        <button aria-label="Shading"><svg><use href="#shade"/></svg></button>
        <button aria-label="Connector color"><svg><use href="#bolt"/></svg></button>
        <button aria-label="Mask"><svg><use href="#noent"/></svg></button>
        <button aria-label="Axes"><svg><use href="#triad"/></svg></button>
        <button aria-label="Inspect"><svg><use href="#lens"/></svg></button>
        <button aria-label="Section"><svg><use href="#clip"/></svg></button>
        <button aria-label="Unlock"><svg><use href="#unlock"/></svg></button>
      </div>
    </section>
  </main>
  <footer class="status">Ready</footer>
</div>
</body>
</html>
```
FILE: styles.css
```css
* { box-sizing: border-box; }
body { margin: 0; background: #f5f5f5; color: #222; font: 9px/12px "Liberation Sans", Arial, sans-serif; }
button, input, select { font: inherit; color: inherit; margin: 0; padding: 0; border: 0; background: none; }
h1, h2 { margin: 0; font-weight: normal; }
svg { display: block; }
.sprite { position: absolute; width: 0; height: 0; }
.element { font: bold 10px "Liberation Sans", Arial, sans-serif; fill: #222; }

.app { display: flex; flex-direction: column; min-height: 100vh; overflow: hidden; }

.titlebar { display: flex; align-items: center; gap: 5px; height: 17px; padding-left: 3px; background: #eff2fb; }
.titlebar h1 { font-size: 9px; line-height: 12px; color: #111; }
.logo { width: 9px; height: 12px; }

.menu { display: flex; align-items: center; gap: 12px; height: 20px; padding-left: 6px; white-space: nowrap; }
.menu a { color: #222; text-decoration: none; line-height: 13px; }
.menu .current { margin: 0 -6px; padding: 2px 6px 0; border-bottom: 2px solid #1a86a8; }
.add-tab svg { width: 10px; height: 10px; }
.add-tab { margin-left: -5px; }

.ribbon { display: flex; height: 99px; }
.group { display: flex; flex-direction: column; padding: 4px 6px 0 5px; border-right: 1px solid #d2d2d2; margin-bottom: 5px; }
.group:first-child { padding: 4px 9px 0 0; }
.group:nth-child(3) { padding: 4px 4px 0 5px; }
.group:last-child { border: 0; }
.tools { display: flex; align-items: flex-start; height: 77px; }
.tool { position: relative; display: flex; flex-direction: column; align-items: center; width: 59px; white-space: nowrap; line-height: 11px; }
.tool.wide { width: 62px; }
.tool > svg { flex: none; width: 48px; height: 48px; }
.dots { width: 5px; height: 2px; margin: 1px 0 4px; background: repeating-linear-gradient(90deg, #8a8a8a 0 2px, transparent 2px 3px); }
.dots.three { width: 8px; }
.dots.none { visibility: hidden; }
.more::after, .drop::after { content: ""; border: 3px solid transparent; border-top: 5px solid #aaa; border-bottom: 0; }
.more::after { position: absolute; right: 0; top: 48px; }
.group h2 { display: flex; align-items: center; justify-content: center; gap: 8px; flex: 1; font-size: 10px; line-height: 12px; }

.workspace { display: flex; flex: 1; }
.sidebar { display: flex; flex-direction: column; flex: 0 0 328px; padding: 0 0 0 1px; }
.tabs { display: flex; height: 18px; }
.tab { display: flex; align-items: center; padding-left: 4px; margin-top: 1px; border-bottom: 1px solid #c4c4c4; }
.tab.active { margin: 0; padding-left: 4px; border-left: 1px solid #c4c4c4; border-bottom: 0; background: linear-gradient(#1a86a8, #1a86a8) 0 0 / 33px 2px no-repeat; }
.tab svg { width: 10px; height: 16px; margin-left: 2px; }
.panel-top { display: flex; justify-content: flex-end; align-items: center; height: 19px; padding-bottom: 3px; }
.close { padding: 0; }
.close svg { width: 8px; height: 8px; }
.panel-top .close, .editor-head .close { margin-right: 1px; }
.search { display: flex; align-items: center; height: 16px; padding: 0 3px 0 2px; margin-bottom: 2px; border: 1px solid #c0c0c0; background: #fff; }
.search input { flex: 1; min-width: 0; outline: 0; font-size: 8px; }
.search input::placeholder { color: #888; }
.search svg { width: 10px; height: 10px; }

.tree-box { height: 274px; border: 1px solid #c0c0c0; background: #fff; }
table { width: 100%; table-layout: fixed; border-collapse: collapse; font-size: 8px; line-height: 12px; }
th, td { padding: 0; text-align: left; font-weight: inherit; }
th { height: 15px; padding-left: 1px; background: #f5f5f5; border-right: 1px solid #c8c8c8; border-bottom: 1px solid #c8c8c8; font-weight: normal; }
th:last-child { border-right: 0; }
.c-name { width: 105px; } .c-id { width: 22px; } .c-color { width: 26px; } .c-inc { width: 40px; }
.sorted { position: relative; }
.sorted::after { content: ""; position: absolute; left: 49px; top: 1px; border: 3px solid transparent; border-top: 0; border-bottom: 3px solid #4a96b8; }
.wheel { display: block; width: 10px; height: 10px; border-radius: 50%; margin-left: 1px; background: conic-gradient(#f33, #f3f, #33f, #3ff, #3f3, #ff3, #f33); }
.tree tbody tr { height: 13px; }
.tree tbody tr:nth-child(3n) { height: 14px; }
.tree td:nth-child(2) { text-align: right; padding-right: 2px; }
.tree td:nth-child(4) { text-align: right; padding-right: 2px; }
.node { display: flex; align-items: center; height: 13px; padding-left: 14px; white-space: nowrap; position: relative; }
.node svg { width: 12px; height: 12px; margin-right: 6px; }
.node.leaf { padding-left: 30px; }
.node.leaf svg { margin-right: 1px; }
.node.leaf svg + svg { margin-right: 4px; }
.node.level2 { padding-left: 28px; }
.node.level3 { padding-left: 42px; }
.dim { opacity: .45; }
.open::before, .shut::before { content: ""; position: absolute; border: 2px solid transparent; }
.open::before { left: 5px; top: 5px; border-top: 3px solid #222; border-bottom: 0; }
.shut::before { left: 6px; top: 5px; border-left: 2px solid #555; border-right: 0; }
.level2.open::before { left: 19px; }
.chip { display: block; width: 11px; height: 11px; border: 1px solid #333; margin-left: 2px; }
.grey { background: #d8d8d8; } .cyan { background: #0ff; } .red { background: #f00; } .brown { background: #8a5212; } .mauve { background: #8c6c68; }
.selected { font-weight: bold; }
.selected td { background: #d8f1fb; }
.selected td:first-child { background: linear-gradient(90deg, #fff 42px, #d8f1fb 42px); }
.selected td:last-child { background: none; }

.editor-head { display: flex; align-items: center; justify-content: space-between; height: 24px; padding-top: 3px; }
.editor-head h2 { font-size: 10px; margin-left: -1px; }
.editor-box { flex: 1; border: 1px solid #c0c0c0; }
.editor th { height: 13px; line-height: 12px; padding-left: 2px; }
.editor th:first-child { width: 70px; }

.viewport { position: relative; flex: 1; display: flex; flex-direction: column; justify-content: flex-end; min-width: 0; }
.scene { position: absolute; left: 0; top: 0; width: 100%; height: 624px; }
.notes { pointer-events: none; z-index: 2; }
.face { font: bold 6px "Liberation Sans", Arial, sans-serif; fill: #444; }
.axis { font: 9px "Liberation Sans", Arial, sans-serif; fill: #777; }
.scale { font: 8px "Liberation Sans", Arial, sans-serif; fill: #555; }
.measure { font: 9px "Open Sans", sans-serif; fill: #123; }

.dialog { position: absolute; left: 5px; top: 3px; width: 297px; padding: 0 5px 6px 4px; border: 1px solid #c6c6c6; background: #f5f5f5; z-index: 1; font-size: 8px; box-shadow: 0 0 1px #ddd; }
.dialog > header { display: flex; align-items: center; gap: 10px; height: 21px; padding: 4px 2px 0 0; }
.dialog h2 { font-size: 11px; margin-left: -1px; }
.grip { flex: 1; height: 7px; background: radial-gradient(circle, #888 0 1px, transparent 1px) 0 0 / 4px 4px; }
.dialog header .close { margin-left: -6px; }
.sheet { padding: 0 3px 5px 0; border: 1px solid #c0c0c0; }
.sheet-head { display: flex; margin-right: -3px; height: 15px; line-height: 14px; border-bottom: 1px solid #c8c8c8; font-size: 9px; }
.sheet-head span { padding-left: 2px; }
.sheet-head span:first-child { width: 93px; padding-left: 3px; border-right: 1px solid #c8c8c8; }
.row { position: relative; display: flex; align-items: center; height: 15px; padding-left: 14px; line-height: 13px; white-space: nowrap; }
.row label { width: 79px; flex: none; }
.row.sub { height: 14px; }
.row.sub label { padding-left: 14px; }
.row.off { color: #999; }
.row input:not([type]), .pick { flex: 1; min-width: 0; height: 13px; background: #fff; border: 1px solid #c6c6c6; padding-left: 1px; }
.row.off input:not([type]), .row.off .pick { background: #f5f5f5; }
.row input:disabled, .row select:disabled { color: #999; opacity: 1; }
.pick { position: relative; }
.pick select { appearance: none; width: 100%; height: 11px; line-height: 11px; display: block; outline: 0; }
.pick::after { content: ""; position: absolute; right: 2px; top: 3px; width: 3px; height: 3px; box-sizing: content-box; border: solid #333; border-width: 0 1px 1px 0; transform: rotate(45deg) translate(-1px, -1px); pointer-events: none; }
.row input[type="checkbox"] { appearance: none; width: 10px; height: 10px; margin-left: 2px; border: 1px solid #bbb; background: #fff; }
.row strong { color: #111; }
.entity { display: flex; flex: 1; align-items: center; justify-content: center; gap: 2px; height: 13px; border: 1px solid #d0d0d0; padding-right: 3px; }
.entity .ico { width: 13px; height: 12px; margin-left: auto; }
.entity .cursor { width: 6px; height: 8px; margin-left: auto; }
.mark { position: relative; }
.mark::after { content: ""; position: absolute; inset: -1px; border: 3px solid; pointer-events: none; }
.orange::after { border-color: #fa5a28; }
.teal::after { border-color: #2cc8d0; }
.dialog > footer { display: flex; justify-content: flex-end; padding-top: 3px; }
.push { width: 56px; height: 17px; border: 1px solid #c0c0c0; background: #f9f9f9; }

.viewbar { position: relative; display: flex; padding: 0 0 5px 18px; }
.viewbar button { width: 28px; display: flex; justify-content: center; }
.viewbar svg { width: 20px; height: 20px; }
.status { height: 19px; padding: 7px 0 0 4px; }
```
